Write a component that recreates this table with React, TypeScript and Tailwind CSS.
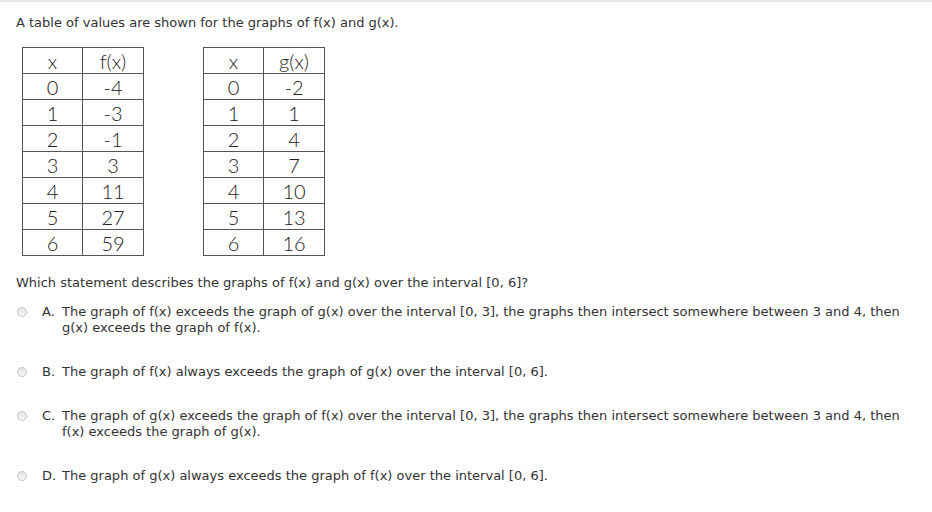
const F_ROWS: [string, string][] = [
  ['0', '-4'],
  ['1', '-3'],
  ['2', '-1'],
  ['3', '3'],
  ['4', '11'],
  ['5', '27'],
  ['6', '59'],
];

const G_ROWS: [string, string][] = [
  ['0', '-2'],
  ['1', '1'],
  ['2', '4'],
  ['3', '7'],
  ['4', '10'],
  ['5', '13'],
  ['6', '16'],
];

const OPTIONS = [
  {
    letter: 'A.',
    text: 'The graph of f(x) exceeds the graph of g(x) over the interval [0, 3], the graphs then intersect somewhere between 3 and 4, then g(x) exceeds the graph of f(x).',
  },
  { letter: 'B.', text: 'The graph of f(x) always exceeds the graph of g(x) over the interval [0, 6].' },
  {
    letter: 'C.',
    text: 'The graph of g(x) exceeds the graph of f(x) over the interval [0, 3], the graphs then intersect somewhere between 3 and 4, then f(x) exceeds the graph of g(x).',
  },
  { letter: 'D.', text: 'The graph of g(x) always exceeds the graph of f(x) over the interval [0, 6].' },
];

function ValueTable({ head, rows }: { head: string; rows: [string, string][] }) {
  return (
    <table className="border-collapse text-[20px] font-light leading-none text-[#222] [font-family:Lato,'Noto_Sans',sans-serif]">
      <tbody>
        <tr>
          <td className="h-[26px] w-[60px] border border-[#555] text-center">x</td>
          <td className="h-[26px] w-[61px] border border-[#555] text-center">{head}</td>
        </tr>
        {rows.map(([x, y]) => (
          <tr key={x}>
            <td className="h-[26px] border border-[#555] text-center">{x}</td>
            <td className="h-[26px] border border-[#555] text-center">{y}</td>
          </tr>
        ))}
      </tbody>
    </table>
  );
}

export default function App() {
  return (
    <div className="h-[512px] w-[932px] overflow-hidden bg-white text-[13px] text-[#333] [font-family:'DejaVu_Sans',Verdana,sans-serif]">
      <div className="h-[2px] bg-[#e6e6e6]" />
      <div className="pl-4 pt-[13px]">
        <p className="leading-4">A table of values are shown for the graphs of f(x) and g(x).</p>

        {/* value tables */}
        <div className="mt-[16px] ml-[6px] flex gap-[59px]">
          <ValueTable head="f(x)" rows={F_ROWS} />
          <ValueTable head="g(x)" rows={G_ROWS} />
        </div>

        <p className="mt-[19px] leading-4">Which statement describes the graphs of f(x) and g(x) over the interval [0, 6]?</p>

        <div className="mt-[13px] pr-6">
          {OPTIONS.map(o => (
            <div key={o.letter} className="mb-[28px] flex leading-4">
              <span className="mt-[3px] ml-[1px] h-[10px] w-[10px] shrink-0 rounded-full border border-[#c4c4c4] bg-gradient-to-b from-[#e4e4e4] to-[#f7f7f7]" />
              <span className="ml-[15px] w-[20px] shrink-0">{o.letter}</span>
              <span>{o.text}</span>
            </div>
          ))}
        </div>
      </div>
    </div>
  );
}
